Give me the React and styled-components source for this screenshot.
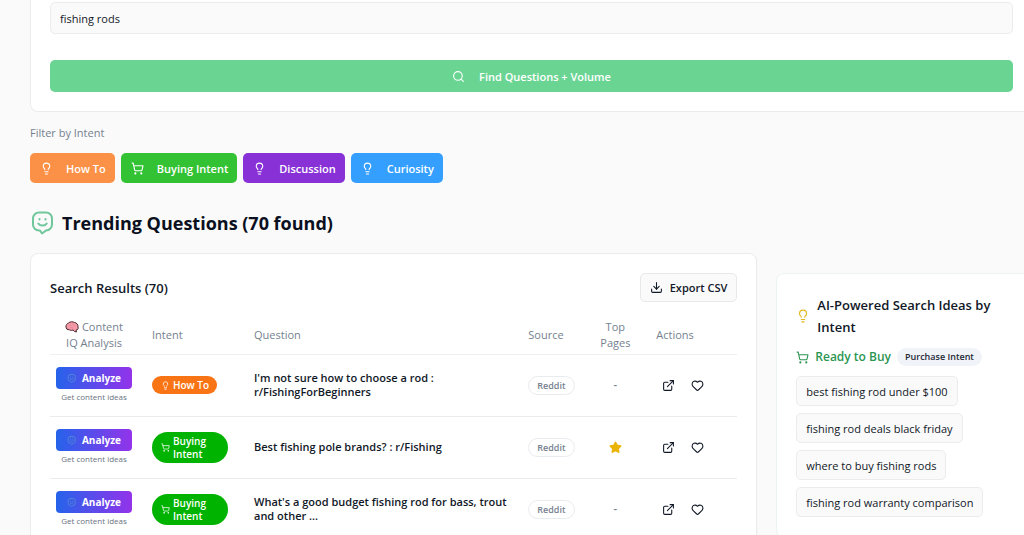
import React from "react";
import styled, { createGlobalStyle } from "styled-components";
import { Search, Lightbulb, ShoppingCart, Download, ExternalLink, Heart, Star } from "lucide-react";

const GlobalStyle = createGlobalStyle`
  *, *::before, *::after { box-sizing: border-box; }
  body {
    margin: 0;
    background: #fafafa;
    color: #111827;
    font-family: "Open Sans", "Noto Sans", sans-serif;
    font-size: 11px;
    overflow-x: hidden;
  }
  button, input { font: inherit; color: inherit; }
  button { cursor: pointer; }
  h1, h2, h3, p { margin: 0; }
  svg { flex: none; }
`;

const Page = styled.main`
  margin: 0 -9px 0 30px;
  overflow: hidden;
`;

const SearchCard = styled.form`
  display: flex;
  flex-direction: column;
  gap: 26px;
  padding: 2px 19px 19px;
  background: #fff;
  border: 1px solid #ececec;
  border-top: 0;
  border-radius: 0 0 8px 8px;
`;

const KeywordInput = styled.input`
  width: 100%;
  height: 32px;
  padding: 0 9px;
  font-weight: 500;
  background: #fafafa;
  border: 1px solid #ececec;
  border-radius: 5px;
`;

const SubmitButton = styled.button`
  display: flex;
  align-items: center;
  justify-content: center;
  gap: 14px;
  height: 32px;
  font-weight: 600;
  color: #fff;
  background: #6ad593;
  border: 0;
  border-radius: 5px;
`;

const FilterLabel = styled.p`
  margin-top: 13px;
  line-height: 16px;
  font-weight: 500;
  color: #75818f;
`;

const Filters = styled.div`
  display: flex;
  flex-wrap: wrap;
  gap: 6px;
  margin-top: 12px;
`;

const FilterButton = styled.button`
  display: flex;
  align-items: center;
  gap: 13px;
  height: 30px;
  padding: 0 9px 0 10px;
  font-weight: 600;
  color: #fff;
  background: ${(p) => p.$color};
  border: 0;
  border-radius: 5px;
`;

const Heading = styled.h1`
  display: flex;
  align-items: center;
  gap: 8px;
  margin-top: 24px;
  font-size: 18px;
  line-height: 32px;
  font-weight: 700;
  color: #0b1020;
`;

const Columns = styled.div`
  display: grid;
  grid-template-columns: minmax(0, 17fr) minmax(0, 6fr);
  align-items: start;
  gap: 19px;
  margin-top: 14px;
`;

const Results = styled.section`
  padding: 19px;
  background: #fff;
  border: 1px solid #ececec;
  border-radius: 8px;
  box-shadow: 0 1px 2px rgba(0, 0, 0, 0.05);
`;

const ResultsHeader = styled.div`
  display: flex;
  align-items: center;
  justify-content: space-between;
  h2 { font-size: 13px; font-weight: 600; }
`;

const ExportButton = styled.button`
  display: flex;
  align-items: center;
  gap: 7px;
  height: 29px;
  padding: 0 9px;
  font-weight: 600;
  background: #fafafa;
  border: 1px solid #e8e8e8;
  border-radius: 5px;
`;

const Table = styled.table`
  width: 100%;
  margin-top: 14px;
  table-layout: fixed;
  border-collapse: collapse;
`;

const Col = styled.col`
  width: ${(p) => p.$w};
`;

const Th = styled.th`
  height: 38px;
  padding: 0 ${(p) => (p.$center ? 12 : 14)}px;
  line-height: 16px;
  font-weight: 500;
  text-align: ${(p) => (p.$center ? "center" : "left")};
  color: #75818f;
  border-bottom: 1px solid #eeeff1;
  svg { vertical-align: -2px; }
`;

const Td = styled.td`
  height: 62px;
  padding: ${(p) => (p.$center ? "0 6px" : "0 0 0 14px")};
  line-height: 14px;
  font-weight: 600;
  text-align: ${(p) => (p.$center ? "center" : "left")};
  color: ${(p) => (p.$muted ? "#75818f" : "inherit")};
  border-bottom: 1px solid #ececec;
  svg { vertical-align: middle; }
`;

const AnalyzeButton = styled.button`
  display: flex;
  align-items: center;
  justify-content: center;
  gap: 6px;
  width: 100%;
  height: 22px;
  font-size: 10px;
  font-weight: 700;
  color: #fff;
  background: linear-gradient(90deg, #2563eb, #9333ea);
  border: 0;
  border-radius: 4px;
`;

const Hint = styled.p`
  margin-top: 2px;
  font-size: 8px;
  line-height: 12px;
  font-weight: 400;
  white-space: nowrap;
  color: #6b7280;
`;

const IntentBadge = styled.span`
  display: inline-flex;
  align-items: center;
  gap: 3px;
  max-width: 76px;
  padding: 3px 8px 2px 9px;
  line-height: 13px;
  font-size: 10px;
  font-weight: 600;
  color: #fff;
  background: ${(p) => p.$color};
  border-radius: 16px;
`;

const SourceBadge = styled.span`
  display: inline-block;
  padding: 1px 8px;
  font-size: 9px;
  line-height: 15px;
  color: #75818f;
  border: 1px solid #e9ecef;
  border-radius: 10px;
`;

const Actions = styled.div`
  display: flex;
  gap: 4px;
`;

const IconButton = styled.button`
  display: flex;
  align-items: center;
  justify-content: center;
  width: 25px;
  height: 25px;
  padding: 0;
  background: none;
  border: 0;
`;

const Ideas = styled.aside`
  margin-top: 20px;
  padding: 20px 19px;
  background: #fff;
  border: 1px solid #ebf3f3;
  border-radius: 8px;
`;

const IdeasTitle = styled.h2`
  display: flex;
  align-items: center;
  gap: 7px;
  font-size: 13px;
  line-height: 22px;
  font-weight: 600;
`;

const IntentTitle = styled.h3`
  display: flex;
  align-items: center;
  gap: 6px;
  margin-top: 10px;
  font-size: 12px;
  line-height: 18px;
  font-weight: 600;
  color: #2c9551;
`;

const PurposeBadge = styled.span`
  padding: 0 8px;
  font-size: 9px;
  color: #1f2937;
  background: #f0f4f9;
  border-radius: 9px;
`;

const IdeaList = styled.div`
  display: flex;
  flex-direction: column;
  align-items: flex-start;
  gap: 7px;
  margin-top: 10px;
`;

const IdeaButton = styled.button`
  height: 30px;
  padding: 0 9px;
  font-weight: 500;
  white-space: nowrap;
  background: #fafafa;
  border: 1px solid #ececec;
  border-radius: 5px;
`;

const SmileBubble = ({ size, color }) => (
  <svg width={size} height={size} viewBox="0 0 24 24" fill="none" stroke={color} strokeWidth="2" strokeLinecap="round" strokeLinejoin="round" aria-hidden="true">
    <path d="M9 1.500h7a6 6 0 0 1 6 6v6a6 6 0 0 1-6 6l-4 3-2-3H9a6 6 0 0 1-6-6v-6a6 6 0 0 1 6-6z" />
    <path d="M8.300 12.500c1.800 2.800 6.600 2.800 8.400 0" />
    <path d="M9.500 8v.5M15.500 8v.5" />
  </svg>
);

const Brain = () => (
  <svg width="14" height="12" viewBox="0 0 28 24" fill="none" strokeLinecap="round" aria-hidden="true">
    <path d="M3 15C0 11 3 5 7 4c3-3 9-3 12-1 4 0 8 5 7 9 1 4-1 6-4 6l1 4-4-1-3-3c-4 2-7 0-8-1-3 1-5 0-5-2z" fill="#f49aa8" stroke="#4a2932" strokeWidth="2" />
    <path d="M8 9c2-2 4-1 5 1M15 6c3 0 4 2 3 4M10 14c3-2 6 0 7 1" stroke="#d97a8b" strokeWidth="1" />
  </svg>
);

const filters = [
  { label: "How To", color: "#fb9146", Icon: Lightbulb },
  { label: "Buying Intent", color: "#33c233", Icon: ShoppingCart },
  { label: "Discussion", color: "#8731d6", Icon: Lightbulb },
  { label: "Curiosity", color: "#359fff", Icon: Lightbulb },
];

const intents = {
  howTo: { label: "How To", color: "#f97415", Icon: Lightbulb },
  buying: { label: "Buying Intent", color: "#00b300", Icon: ShoppingCart },
};

const rows = [
  { intent: "howTo", question: "I'm not sure how to choose a rod : r/FishingForBeginners", top: false },
  { intent: "buying", question: "Best fishing pole brands? : r/Fishing", top: true },
  { intent: "buying", question: "What's a good budget fishing rod for bass, trout and other ...", top: false },
];

const ideas = [
  "best fishing rod under $100",
  "fishing rod deals black friday",
  "where to buy fishing rods",
  "fishing rod warranty comparison",
];

function ResultRow({ intent, question, top }) {
  const { label, color, Icon } = intents[intent];
  return (
    <tr>
      <Td $center>
        <AnalyzeButton type="button"><SmileBubble size={9} color="#5591d0" />Analyze</AnalyzeButton>
        <Hint>Get content ideas</Hint>
      </Td>
      <Td><IntentBadge $color={color}><Icon size={9} strokeWidth={2} />{label}</IntentBadge></Td>
      <Td>{question}</Td>
      <Td><SourceBadge>Reddit</SourceBadge></Td>
      <Td $center $muted>
        {top ? <Star size={13} color="#eab308" fill="#eab308" aria-label="Top page" /> : "-"}
      </Td>
      <Td>
        <Actions>
          <IconButton type="button" aria-label="Open question"><ExternalLink size={13} /></IconButton>
          <IconButton type="button" aria-label="Save question"><Heart size={13} /></IconButton>
        </Actions>
      </Td>
    </tr>
  );
}

export default function App() {
  return (
    <>
      <GlobalStyle />
      <Page>
        <SearchCard onSubmit={(e) => e.preventDefault()}>
          <KeywordInput type="text" aria-label="Keyword" defaultValue="fishing rods" />
          <SubmitButton type="submit"><Search size={13} />Find Questions + Volume</SubmitButton>
        </SearchCard>

        <FilterLabel>Filter by Intent</FilterLabel>
        <Filters>
          {filters.map(({ label, color, Icon }) => (
            <FilterButton key={label} type="button" $color={color}><Icon size={13} />{label}</FilterButton>
          ))}
        </Filters>

        <Heading><SmileBubble size={24} color="#6fc79b" />Trending Questions (70 found)</Heading>

        <Columns>
          <Results>
            <ResultsHeader>
              <h2>Search Results (70)</h2>
              <ExportButton type="button"><Download size={13} />Export CSV</ExportButton>
            </ResultsHeader>
            <Table>
              <colgroup>
                <Col $w="88px" />
                <Col $w="102px" />
                <Col $w="auto" />
                <Col $w="74px" />
                <Col $w="54px" />
                <Col $w="95px" />
              </colgroup>
              <thead>
                <tr>
                  <Th $center><Brain /> Content IQ Analysis</Th>
                  <Th>Intent</Th>
                  <Th>Question</Th>
                  <Th>Source</Th>
                  <Th $center>Top Pages</Th>
                  <Th>Actions</Th>
                </tr>
              </thead>
              <tbody>
                {rows.map((row) => <ResultRow key={row.question} {...row} />)}
              </tbody>
            </Table>
          </Results>

          <Ideas>
            <IdeasTitle><Lightbulb size={14} color="#e3b91f" />AI-Powered Search Ideas by Intent</IdeasTitle>
            <IntentTitle>
              <ShoppingCart size={13} />Ready to Buy<PurposeBadge>Purchase Intent</PurposeBadge>
            </IntentTitle>
            <IdeaList>
              {ideas.map((idea) => <IdeaButton key={idea} type="button">{idea}</IdeaButton>)}
            </IdeaList>
          </Ideas>
        </Columns>
      </Page>
    </>
  );
}
